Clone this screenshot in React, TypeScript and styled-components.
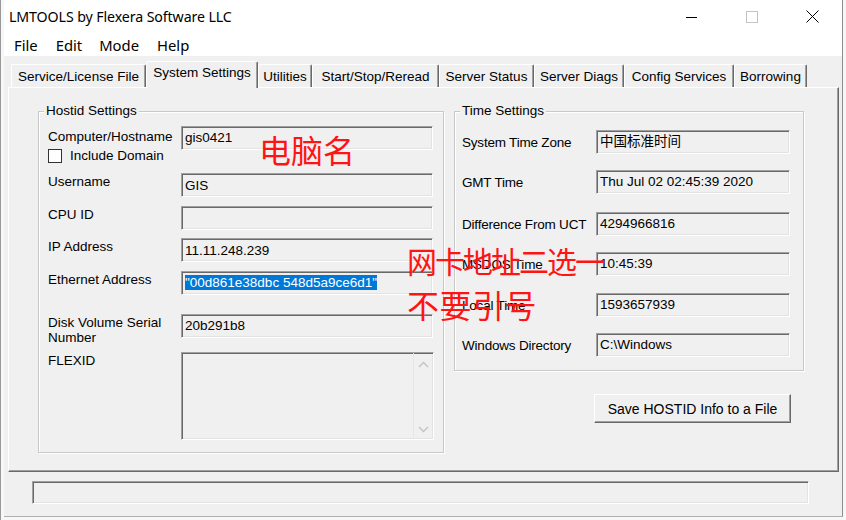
import styled, { createGlobalStyle } from 'styled-components';

const GlobalStyle = createGlobalStyle`
  html, body {
    margin: 0;
    padding: 0;
    background: #f7f7f7;
    width: 846px;
    height: 520px;
    overflow: hidden;
  }
  body {
    font-family: "Liberation Sans", Arial, sans-serif;
  }
`;

const Desktop = styled.div`
  width: 846px;
  height: 520px;
  padding-left: 3px;
  box-sizing: border-box;
  border-left: 1px solid #9a9a9a;
`;

const Window = styled.div`
  position: relative;
  width: 839px;
  height: 517px;
  background: #f0f0f0;
  border-right: 1px solid #8c8c8c;
  border-bottom: 1px solid #b0b0b0;
  box-sizing: border-box;
  display: flex;
  flex-direction: column;
`;

const TitleBar = styled.div`
  height: 33px;
  background: #fff;
  display: flex;
  align-items: center;
  justify-content: space-between;
`;

const Title = styled.div`
  padding-left: 5px;
  font-family: "Noto Sans", "Open Sans", sans-serif;
  font-size: 14.2px;
  color: #000;
  letter-spacing: -0.1px;
`;

const Controls = styled.div`
  display: flex;
  height: 33px;
`;

const ControlButton = styled.div`
  width: 60px;
  height: 33px;
  display: flex;
  align-items: center;
  justify-content: center;
`;

const MenuBar = styled.div`
  height: 23px;
  background: #fff;
  display: flex;
  align-items: center;
  padding-left: 10px;
  font-family: "Noto Sans", "Open Sans", sans-serif;
  font-size: 14.8px;
`;

const MenuItem = styled.span<{ $gap: number }>`
  margin-right: ${({ $gap }) => $gap}px;
  color: #000;
`;

const Body = styled.div`
  flex: 1;
  padding: 5px 3px 0 4px;
  display: flex;
  flex-direction: column;
  font-size: 13.5px;
  color: #000;
`;

const TabStrip = styled.div`
  height: 26px;
  display: flex;
  align-items: flex-end;
  padding-left: 3px;
`;

const Tab = styled.div<{ $w: number; $active?: boolean }>`
  position: relative;
  z-index: ${({ $active }) => ($active ? 2 : 1)};
  width: ${({ $w }) => $w}px;
  height: ${({ $active }) => ($active ? 27 : 23)}px;
  margin-bottom: ${({ $active }) => ($active ? -1 : 0)}px;
  box-sizing: border-box;
  background: #f0f0f0;
  border-top: 1px solid #fff;
  border-left: 1px solid #fff;
  border-right: 1px solid #696969;
  box-shadow: inset -1px 0 #a0a0a0;
  border-top-left-radius: 2px;
  border-top-right-radius: 2px;
  display: flex;
  align-items: ${({ $active }) => ($active ? 'flex-start' : 'center')};
  padding-top: ${({ $active }) => ($active ? 3 : 0)}px;
  justify-content: center;
  white-space: nowrap;
`;

const Panel = styled.div`
  position: relative;
  z-index: 1;
  height: 385px;
  box-sizing: border-box;
  border-top: 1px solid #fff;
  border-left: 1px solid #fff;
  border-right: 1px solid #696969;
  border-bottom: 1px solid #696969;
  box-shadow: inset -1px -1px #a0a0a0;
  padding: 23px 0 0 29px;
  display: flex;
  align-items: flex-start;
`;

const Group = styled.div<{ $w: number }>`
  position: relative;
  width: ${({ $w }) => $w}px;
  box-sizing: border-box;
  border: 1px solid #c9c9c9;
  box-shadow: inset 1px 1px #fff, 1px 1px #fff;
`;

const Caption = styled.span`
  position: absolute;
  top: -9px;
  left: 5px;
  padding: 0 2px;
  background: #f0f0f0;
  line-height: 16px;
`;

const HostidBody = styled.div`
  padding: 14px 9px 12px 9px;
`;

const TimeBody = styled.div`
  padding: 18px 12px 13px 7px;
`;

const Row = styled.div<{ $h: number }>`
  height: ${({ $h }) => $h}px;
  display: flex;
  align-items: flex-start;
`;

const LabelCol = styled.div<{ $w: number; $pt?: number; $tight?: boolean }>`
  width: ${({ $w }) => $w}px;
  flex-shrink: 0;
  padding-top: ${({ $pt }) => $pt ?? 2}px;
  line-height: 15px;
  white-space: nowrap;
  letter-spacing: ${({ $tight }) => ($tight ? '-0.2px' : '0')};
`;

const Field = styled.div<{ $w: number; $h?: number; $pt?: number }>`
  position: relative;
  width: ${({ $w }) => $w}px;
  height: ${({ $h }) => $h ?? 24}px;
  box-sizing: border-box;
  background: #f0f0f0;
  border-top: 1px solid #a0a0a0;
  border-left: 1px solid #a0a0a0;
  border-right: 1px solid #fff;
  border-bottom: 1px solid #fff;
  box-shadow: inset 1px 1px #696969, inset -1px -1px #e3e3e3;
  padding: ${({ $pt }) => $pt ?? 3}px 0 0 3px;
  line-height: 16px;
  white-space: nowrap;
  font-family: "Liberation Sans", "Noto Sans CJK SC", sans-serif;
`;

const Selected = styled.span`
  background: #0078d7;
  color: #fff;
`;

const CheckLine = styled.div`
  display: flex;
  align-items: center;
  margin-top: 4px;
`;

const CheckBox = styled.span`
  width: 14px;
  height: 14px;
  box-sizing: border-box;
  border: 1px solid #333;
  background: #fff;
  margin-right: 8px;
`;

const ScrollTrack = styled.div`
  position: absolute;
  top: 0;
  right: 0;
  bottom: 0;
  width: 20px;
  border-left: 1px solid #e6e6e6;
  display: flex;
  flex-direction: column;
  justify-content: space-between;
  align-items: center;
  padding: 8px 0 6px;
  box-sizing: border-box;
`;

const RightCol = styled.div`
  margin-left: 10px;
  display: flex;
  flex-direction: column;
`;

const Button = styled.div`
  align-self: flex-end;
  margin: 23px 13px 0 0;
  width: 197px;
  height: 29px;
  box-sizing: border-box;
  border-top: 1px solid #fff;
  border-left: 1px solid #fff;
  border-right: 1px solid #696969;
  border-bottom: 1px solid #696969;
  box-shadow: inset -1px -1px #a0a0a0;
  display: flex;
  align-items: center;
  justify-content: center;
  font-size: 14px;
`;

const StatusField = styled(Field)`
  margin: 9px 0 0 24px;
`;

const Note = styled.div<{ $x: number; $y: number; $size: number; $ls?: number }>`
  position: absolute;
  left: ${({ $x }) => $x}px;
  top: ${({ $y }) => $y}px;
  font-family: "Noto Sans CJK SC", sans-serif;
  font-size: ${({ $size }) => $size}px;
  letter-spacing: ${({ $ls }) => $ls ?? 0}px;
  line-height: 1;
  color: #ff1414;
  white-space: nowrap;
  z-index: 5;
`;

const menus = [
  { label: 'File', gap: 18 },
  { label: 'Edit', gap: 17 },
  { label: 'Mode', gap: 18 },
  { label: 'Help', gap: 0 },
];

const tabs = [
  { label: 'Service/License File', w: 135 },
  { label: 'System Settings', w: 112, active: true },
  { label: 'Utilities', w: 54 },
  { label: 'Start/Stop/Reread', w: 127 },
  { label: 'Server Status', w: 95 },
  { label: 'Server Diags', w: 90 },
  { label: 'Config Services', w: 110 },
  { label: 'Borrowing', w: 73 },
];

const timeRows = [
  { label: 'System Time Zone', value: '中国标准时间', h: 40 },
  { label: 'GMT Time', value: 'Thu Jul 02 02:45:39 2020', h: 42 },
  { label: 'Difference From UCT', value: '4294966816', h: 40 },
  { label: 'MSDOS Time', value: '10:45:39', h: 41 },
  { label: 'Local Time', value: '1593657939', h: 40 },
  { label: 'Windows Directory', value: 'C:\\Windows', h: 24 },
];

const Chevron = ({ up }: { up?: boolean }) => (
  <svg width="11" height="7" viewBox="0 0 11 7">
    <path d={up ? 'M1 6 L5.5 1.5 L10 6' : 'M1 1 L5.5 5.5 L10 1'} fill="none" stroke="#c2c2c2" strokeWidth="1.3" />
  </svg>
);

export default function App() {
  return (
    <Desktop>
      <GlobalStyle />
      <Window>
        <TitleBar>
          <Title>LMTOOLS by Flexera Software LLC</Title>
          <Controls>
            <ControlButton>
              <svg width="12" height="12" viewBox="0 0 12 12">
                <path d="M0 6.5 H11" stroke="#000" strokeWidth="1" />
              </svg>
            </ControlButton>
            <ControlButton>
              <svg width="12" height="12" viewBox="0 0 12 12">
                <rect x="0.5" y="0.5" width="11" height="11" fill="none" stroke="#c4c4c4" strokeWidth="1" />
              </svg>
            </ControlButton>
            <ControlButton>
              <svg width="13" height="13" viewBox="0 0 13 13">
                <path d="M0.5 0.5 L12.5 12.5 M12.5 0.5 L0.5 12.5" stroke="#000" strokeWidth="1" />
              </svg>
            </ControlButton>
          </Controls>
        </TitleBar>
        <MenuBar>
          {menus.map((m) => (
            <MenuItem key={m.label} $gap={m.gap}>
              {m.label}
            </MenuItem>
          ))}
        </MenuBar>
        <Body>
          <TabStrip>
            {tabs.map((t) => (
              <Tab key={t.label} $w={t.w} $active={t.active}>
                {t.label}
              </Tab>
            ))}
          </TabStrip>
          <Panel>
            <Group $w={406}>
              <Caption>Hostid Settings</Caption>
              <HostidBody>
                <Row $h={47}>
                  <LabelCol $w={133} $pt={3}>
                    Computer/Hostname
                    <CheckLine>
                      <CheckBox />
                      Include Domain
                    </CheckLine>
                  </LabelCol>
                  <Field $w={252}>gis0421</Field>
                </Row>
                <Row $h={33}>
                  <LabelCol $w={133} $pt={1}>Username</LabelCol>
                  <Field $w={252} $pt={4}>GIS</Field>
                </Row>
                <Row $h={32}>
                  <LabelCol $w={133} $pt={1}>CPU ID</LabelCol>
                  <Field $w={252} />
                </Row>
                <Row $h={33}>
                  <LabelCol $w={133} $pt={1}>IP Address</LabelCol>
                  <Field $w={252} $pt={4}>11.11.248.239</Field>
                </Row>
                <Row $h={43}>
                  <LabelCol $w={133} $pt={1}>Ethernet Address</LabelCol>
                  <Field $w={252}>
                    <Selected>"00d861e38dbc 548d5a9ce6d1"</Selected>
                  </Field>
                </Row>
                <Row $h={38}>
                  <LabelCol $w={133} $pt={1}>
                    Disk Volume Serial
                    <br />
                    Number
                  </LabelCol>
                  <Field $w={252}>20b291b8</Field>
                </Row>
                <Row $h={88}>
                  <LabelCol $w={133} $pt={1}>FLEXID</LabelCol>
                  <Field $w={253} $h={88}>
                    <ScrollTrack>
                      <Chevron up />
                      <Chevron />
                    </ScrollTrack>
                  </Field>
                </Row>
              </HostidBody>
            </Group>
            <RightCol>
              <Group $w={350}>
                <Caption>Time Settings</Caption>
                <TimeBody>
                  {timeRows.map((r) => (
                    <Row key={r.label} $h={r.h}>
                      <LabelCol $w={134} $pt={5} $tight>
                        {r.label}
                      </LabelCol>
                      <Field $w={194}>{r.value}</Field>
                    </Row>
                  ))}
                </TimeBody>
              </Group>
              <Button>Save HOSTID Info to a File</Button>
            </RightCol>
          </Panel>
          <StatusField $w={777} $h={23} />
        </Body>
        <Note $x={255} $y={133} $size={32}>电脑名</Note>
        <Note $x={403} $y={245} $size={30} $ls={-2}>网卡地址二选一</Note>
        <Note $x={403} $y={288} $size={32} $ls={0.5}>不要引号</Note>
      </Window>
    </Desktop>
  );
}
